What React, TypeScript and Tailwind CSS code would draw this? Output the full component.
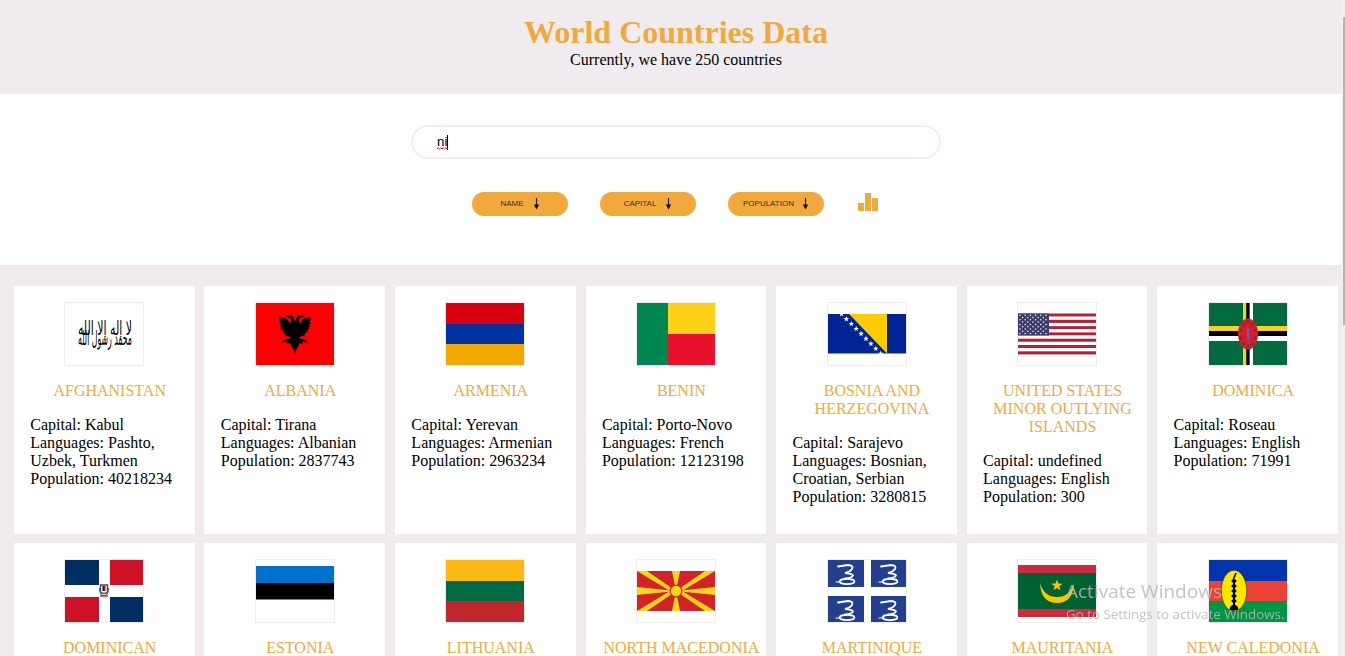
import React from "react";

const Flag = ({ children }: { children: React.ReactNode }) => (
  <div className="w-[80px] h-[64px] border border-[#f0ecf0] bg-white ml-[34.05px] shrink-0">
    <svg viewBox="0 0 78 62" width="78" height="62" className="block">{children}</svg>
  </div>
);

const Afghanistan = () => (
  <g opacity="0.99" fill="#000" style={{ fontFamily: '"DejaVu Sans", sans-serif' }}>
    <text x="40" y="32" textAnchor="middle" fontSize="20" textLength="54" lengthAdjust="spacingAndGlyphs">لا إله إلا الله</text>
    <text x="40" y="42" textAnchor="middle" fontSize="20" textLength="54" lengthAdjust="spacingAndGlyphs">محمد رسول الله</text>
  </g>
);

const eagleHalf = "M39 19 L40 16 L41 13.5 L43 12 L46 12.5 L48.5 13 L45.5 14.5 L43.5 15 L43 18 L44 21 L46 17 L49 15 L54 14 L55 14 L53.5 16 L55.5 16.5 L53 19 L55 19.5 L52.5 22 L54.5 22.5 L52 25 L53.5 25.5 L50.5 28 L52 28.5 L48.5 31 L49.5 32 L45.5 33.5 L43 34 L44 35.5 L47 36 L51 38 L52 39.5 L48 39 L46 38.5 L47 41 L44 40 L43 42 L42 44 L41 45.5 L40 47.5 L39 51 Z";
const Albania = () => (
  <>
    <rect width="78" height="62" fill="#ff0000" />
    <path d={eagleHalf} fill="#000" />
    <path d={eagleHalf} fill="#000" transform="translate(78 0) scale(-1 1)" />
  </>
);

const Armenia = () => (
  <>
    <rect width="78" height="21" fill="#d90012" />
    <rect y="21" width="78" height="21" fill="#0033a0" />
    <rect y="41" width="78" height="21" fill="#f2a800" />
  </>
);

const Benin = () => (
  <>
    <rect width="31" height="62" fill="#008751" />
    <rect x="31" width="47" height="31" fill="#fcd116" />
    <rect x="31" y="31" width="47" height="31" fill="#e8112d" />
  </>
);

const star = (cx: number, cy: number, r: number) => {
  const pts: string[] = [];
  for (let i = 0; i < 10; i++) {
    const a = -Math.PI / 2 + (i * Math.PI) / 5;
    const rr = i % 2 ? r * 0.4 : r;
    pts.push(`${(cx + rr * Math.cos(a)).toFixed(2)},${(cy + rr * Math.sin(a)).toFixed(2)}`);
  }
  return pts.join(" ");
};

const Bosnia = () => (
  <>
    <rect y="11" width="78" height="39.5" fill="#002395" />
    <polygon points="21,11 59,11 59,50.5" fill="#fecb00" />
    {[0, 1, 2, 3, 4, 5, 6, 7, 8].map((i) => (
      <polygon key={i} points={star(13.5 + i * 4.9, 11 + i * 4.95, 3)} fill="#fff" />
    ))}
  </>
);

const USA = () => (
  <>
    {Array.from({ length: 13 }).map((_, i) => (
      <rect key={i} y={10.5 + i * 3.15} width="78" height="3.15" fill={i % 2 ? "#fff" : "#b22234"} />
    ))}
    <rect y="10.5" width="31" height="22" fill="#3c3b6e" />
    {Array.from({ length: 9 }).map((_, r) =>
      Array.from({ length: r % 2 ? 5 : 6 }).map((_, c) => (
        <circle key={`${r}-${c}`} cx={(r % 2 ? 4.6 : 2) + c * 5.2} cy={12.2 + r * 2.3} r="0.75" fill="#fff" />
      ))
    )}
  </>
);

const Dominica = () => (
  <>
    <rect width="78" height="62" fill="#006b3f" />
    <rect x="34" width="3.4" height="62" fill="#fcd116" />
    <rect x="37.4" width="3.3" height="62" fill="#000" />
    <rect x="40.7" width="3.3" height="62" fill="#fff" />
    <rect y="23" width="78" height="5" fill="#fcd116" />
    <rect y="28" width="78" height="5" fill="#000" />
    <rect y="33" width="78" height="5" fill="#fff" />
    <ellipse cx="39" cy="31" rx="10" ry="15.5" fill="#d41c30" />
    {Array.from({ length: 10 }).map((_, i) => {
      const a = (i * Math.PI * 2) / 10;
      return <circle key={i} cx={39 + 7.6 * Math.sin(a)} cy={31 + 12.4 * Math.cos(a)} r="1.1" fill="#0a5a32" />;
    })}
    <path d="M38 23 L40 26 L40.5 35 L39 39 L38 34 Z" fill="#7a5aa6" />
    <path d="M38.5 36 L41 41" stroke="#3f7a3a" strokeWidth="1" />
  </>
);

const DominicanRep = () => (
  <>
    <rect width="78" height="62" fill="#fff" />
    <rect width="34" height="25" fill="#002d62" />
    <rect x="45" width="33" height="25" fill="#ce1126" />
    <rect y="37" width="34" height="25" fill="#ce1126" />
    <rect x="45" y="37" width="33" height="25" fill="#002d62" />
    <path d="M35.5 25 h7 v7 q-3.5 3 -7 0 Z" fill="#fff" stroke="#3a4f5c" strokeWidth="1.4" />
    <rect x="37.4" y="26" width="1.6" height="5" fill="#002d62" />
    <rect x="39" y="26" width="1.6" height="5" fill="#ce1126" />
    <path d="M34.5 28 q0 7 4.5 8 q4.5 -1 4.5 -8" fill="none" stroke="#2c6e3f" strokeWidth="1.1" />
    <path d="M35 36 h8" stroke="#ce1126" strokeWidth="1.2" />
  </>
);

const Estonia = () => (
  <>
    <rect y="6" width="78" height="17" fill="#0072ce" />
    <rect y="23" width="78" height="16.5" fill="#000" />
  </>
);

const Lithuania = () => (
  <>
    <rect width="78" height="21" fill="#fdb913" />
    <rect y="21" width="78" height="21" fill="#006a44" />
    <rect y="41" width="78" height="21" fill="#c1272d" />
  </>
);

const Macedonia = () => (
  <>
    <rect y="11" width="78" height="40" fill="#d2232a" />
    <g fill="#f9d616">
      <polygon points="0,11 10,11 39,31 33,31" />
      <polygon points="78,11 68,11 39,31 45,31" />
      <polygon points="0,51 10,51 39,31 33,31" />
      <polygon points="78,51 68,51 39,31 45,31" />
      <polygon points="35,11 43,11 39,31" />
      <polygon points="35,51 43,51 39,31" />
      <polygon points="0,27 0,35 39,31" />
      <polygon points="78,27 78,35 39,31" />
      <circle cx="39" cy="31" r="6.5" fill="#d2232a" />
      <circle cx="39" cy="31" r="5.2" />
    </g>
  </>
);

const Snake = ({ x, y }: { x: number; y: number }) => (
  <g transform={`translate(${x} ${y})`} fill="none" stroke="#fff" strokeLinecap="round">
    <path d="M10 6.5 L20 5 Q26 5.5 24 9 Q22 12 17 13 Q24 13.5 25 15.5 Q24 18 17 18.5" strokeWidth="1.8" />
    <ellipse cx="19" cy="21.5" rx="7.5" ry="2.6" strokeWidth="1.6" />
    <path d="M8 22 L13 22" strokeWidth="1.2" />
  </g>
);

const Martinique = () => (
  <>
    <rect width="36" height="27" fill="#233f8f" />
    <rect x="43" width="35" height="27" fill="#233f8f" />
    <rect y="36" width="36" height="26" fill="#233f8f" />
    <rect x="43" y="36" width="35" height="26" fill="#233f8f" />
    <Snake x={0} y={0} />
    <Snake x={43} y={0} />
    <Snake x={0} y={36} />
    <Snake x={43} y={36} />
  </>
);

const Mauritania = () => (
  <>
    <rect y="5" width="78" height="52" fill="#cd2a3e" />
    <rect y="13" width="78" height="36" fill="#006233" />
    <path d="M22 23 Q23 43 39 43 Q55 43 56 23 Q52 37 39 37 Q26 37 22 23 Z" fill="#ffc400" />
    <polygon points={star(39, 25.5, 6)} fill="#ffc400" />
  </>
);

const NewCaledonia = () => (
  <>
    <rect width="78" height="21" fill="#0035ad" />
    <rect y="21" width="78" height="21" fill="#ed4135" />
    <rect y="41" width="78" height="21" fill="#009543" />
    <ellipse cx="25" cy="30.8" rx="12.7" ry="20.5" fill="#fae600" stroke="#1a1a1a" strokeWidth="0.5" />
    <path d="M27 13 L24.5 19" stroke="#000" strokeWidth="1.6" />
    <rect x="24" y="19" width="2" height="26" fill="#000" />
    {[21, 26, 31, 36, 41].map((y) => (
      <ellipse key={y} cx="25" cy={y} rx="2.6" ry="1.8" fill="#000" />
    ))}
    <path d="M20.5 50 Q21 45 25 44.5 Q29 45 29.5 50 Q25 51.5 20.5 50 Z" fill="#000" />
  </>
);

type C = { name: string; capital?: string; languages?: string; population?: number; flag: React.ReactNode };

const countries: C[] = [
  { name: "Afghanistan", capital: "Kabul", languages: "Pashto, Uzbek, Turkmen", population: 40218234, flag: <Afghanistan /> },
  { name: "Albania", capital: "Tirana", languages: "Albanian", population: 2837743, flag: <Albania /> },
  { name: "Armenia", capital: "Yerevan", languages: "Armenian", population: 2963234, flag: <Armenia /> },
  { name: "Benin", capital: "Porto-Novo", languages: "French", population: 12123198, flag: <Benin /> },
  { name: "Bosnia and Herzegovina", capital: "Sarajevo", languages: "Bosnian, Croatian, Serbian", population: 3280815, flag: <Bosnia /> },
  { name: "United States Minor Outlying Islands", capital: "undefined", languages: "English", population: 300, flag: <USA /> },
  { name: "Dominica", capital: "Roseau", languages: "English", population: 71991, flag: <Dominica /> },
  { name: "Dominican", flag: <DominicanRep /> },
  { name: "Estonia", flag: <Estonia /> },
  { name: "Lithuania", flag: <Lithuania /> },
  { name: "North Macedonia", flag: <Macedonia /> },
  { name: "Martinique", flag: <Martinique /> },
  { name: "Mauritania", flag: <Mauritania /> },
  { name: "New Caledonia", flag: <NewCaledonia /> },
];

const Arrow = () => (
  <svg width="7" height="12" viewBox="0 0 7 12" className="block shrink-0">
    <path d="M3.5 0 V7" stroke="#222" strokeWidth="1.2" />
    <path d="M0.8 6.5 H6.2 L3.5 11.5 Z" fill="#111" />
  </svg>
);

const SortButton = ({ label, gap }: { label: string; gap: string }) => (
  <button className={`w-[96px] h-[24px] rounded-full bg-[#f2a93b] flex items-center justify-center ${gap} text-[8px] leading-none text-[#3f3018] uppercase`} style={{ fontFamily: '"Liberation Sans", Arial, sans-serif' }}>
    <span>{label}</span>
    <Arrow />
  </button>
);

export default function App() {
  return (
    <div className="h-screen overflow-hidden flex bg-white text-black text-[16px] leading-[18px]" style={{ fontFamily: '"Liberation Serif", "Times New Roman", serif' }}>
      <main className="w-[1342px] shrink-0">
        <header className="h-[94px] bg-[#efebef] pl-[10px] pt-[14px] text-center">
          <h1 className="text-[32px] leading-[37px] font-bold text-[#f2a93b]">World Countries Data</h1>
          <p className="leading-[18px]">Currently, we have 250 countries</p>
        </header>

        <section className="h-[171px] bg-white pl-[10px] pt-[31px] flex flex-col items-center">
          <div className="w-[530px] h-[34px] rounded-full border-2 border-[#f3eeee] pl-[24px] flex items-center text-[13.33px] leading-none" style={{ fontFamily: '"Liberation Sans", Arial, sans-serif' }}>
            <span className="relative">
              ni
              <svg width="10" height="3" viewBox="0 0 10 3" className="absolute left-0 top-[12px] block">
                <path d="M0 2 L1.25 0.8 L2.5 2 L3.75 0.8 L5 2 L6.25 0.8 L7.5 2 L8.75 0.8 L10 2" fill="none" stroke="#ff0000" strokeWidth="1" />
              </svg>
            </span>
            <span className="w-px h-[15px] bg-black" />
          </div>
          <div className="mt-[33px] mr-[2px] flex items-center gap-[32px]">
            <SortButton label="Name" gap="gap-[9px]" />
            <SortButton label="Capital" gap="gap-[9px]" />
            <SortButton label="Population" gap="gap-[8px]" />
            <svg width="20" height="18" viewBox="0 0 20 18" className="block -mt-[4px] ml-[2px]">
              <rect x="0" y="10" width="6" height="8" fill="#f2a93b" />
              <rect x="7" y="0" width="6" height="18" fill="#f2a93b" />
              <rect x="14" y="5" width="6" height="13" fill="#f2a93b" />
            </svg>
          </div>
        </section>

        <section className="bg-[#efebef] pl-[13.85px] pt-[21px] pb-[20px]">
          <div className="grid grid-cols-[repeat(7,180.7px)] gap-x-[9.88px] gap-y-[9px]">
            {countries.map((c) => (
              <article key={c.name} className="h-[248px] bg-white py-[16px] px-[16.4px]">
                <Flag>{c.flag}</Flag>
                <h2 className="mt-[16px] ml-[-5px] mr-[-16px] text-center uppercase text-[#f2a93b] font-normal">{c.name}</h2>
                {c.capital && (
                  <div className="mt-[16px]">
                    <p>Capital: {c.capital}</p>
                    <p>Languages: {c.languages}</p>
                    <p>Population: {c.population}</p>
                  </div>
                )}
              </article>
            ))}
          </div>
        </section>
      </main>

      <div className="w-[3px] h-full bg-[#f1f1f1] pt-[17px] flex justify-end">
        <div className="w-[2px] h-[308px] bg-[#b5b5b5]" />
      </div>

      <div className="fixed left-[1066px] top-[578px] pointer-events-none text-[#b8b8b8]/85" style={{ fontFamily: '"Open Sans", sans-serif' }}>
        <p className="text-[19px] leading-[26px]">Activate Windows</p>
        <p className="text-[13.33px] leading-[18px] mt-[1px]">Go to Settings to activate Windows.</p>
      </div>
    </div>
  );
}
